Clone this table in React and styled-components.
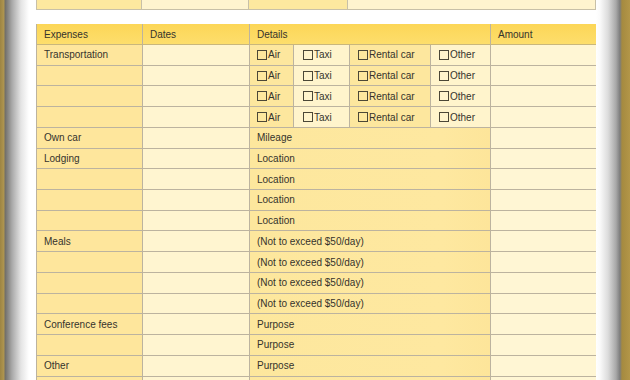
import React from 'react';
import styled, { createGlobalStyle } from 'styled-components';

const GlobalStyle = createGlobalStyle`
  html, body {
    margin: 0;
    padding: 0;
    background: #ffffff;
  }
  body {
    width: 630px;
    height: 380px;
    overflow: hidden;
    font-family: "Liberation Sans", Arial, sans-serif;
  }
`;

const Frame = styled.div`
  display: grid;
  grid-template-columns: 36px 560px 34px;
  width: 630px;
  height: 380px;
  overflow: hidden;
`;

const LeftEdge = styled.div`
  background: linear-gradient(
    to right,
    #9c8443 0px,
    #b09650 4px,
    #6f6d68 5px,
    #a9a9a9 12px,
    #e4e4e4 21px,
    #ffffff 29px
  );
`;

const RightEdge = styled.div`
  background: linear-gradient(
    to right,
    #ffffff 0px,
    #fafafa 4px,
    #dcdcdc 12px,
    #a8a8a8 20px,
    #7c7c7c 24px,
    #a58a40 26px,
    #b39648 34px
  );
`;

const Page = styled.div`
  display: flex;
  flex-direction: column;
  gap: 14px;
  background: #ffffff;
  overflow: hidden;
`;

const TopStrip = styled.div`
  display: grid;
  grid-template-columns: 106px 107px 99px 248px;
  height: 10px;
  flex-shrink: 0;
  border-bottom: 1px solid #c8c0a8;
  box-sizing: border-box;
`;

const StripCell = styled.div`
  background: ${(p) => (p.$dark ? '#fde89f' : '#fff4cf')};
  border-right: 1px solid #c8c0a8;
  border-left: ${(p) => (p.$first ? '1px solid #c8c0a8' : 'none')};
`;

const Sheet = styled.div`
  display: grid;
  grid-template-columns: 106px 107px 44px 56px 81px 60px 106px;
  grid-template-rows: 21px;
  grid-auto-rows: 20.73px;
  border-left: 1px solid #bcb39f;
  box-sizing: border-box;
  color: #35332c;
  font-size: 10px;
`;

const Cell = styled.div`
  display: flex;
  align-items: center;
  box-sizing: border-box;
  padding-left: ${(p) => p.$pad || 7}px;
  border-right: 1px solid #bcb39f;
  border-bottom: 1px solid #bcb39f;
  grid-column: ${(p) => p.$span || 'auto'};
  white-space: nowrap;
  background: ${(p) => p.$bg};
`;

const HeadCell = styled(Cell)`
  background: linear-gradient(to bottom, #fcd657, #fdde6c);
  border-bottom: 1px solid #c9b77c;
`;

const Box = styled.span`
  display: inline-block;
  width: 8px;
  height: 8px;
  border: 1px solid #4b4737;
  margin-right: 1px;
  flex-shrink: 0;
`;

const colors = {
  expense: '#fee69c',
  dates: '#fff5d0',
  details: 'linear-gradient(to right, #fde79d, #fee8a0 80%, #fde59a)',
  light: '#fff4cc',
  amount: '#fff6d4',
};

const rows = [
  { label: 'Transportation', transport: true },
  { label: '', transport: true },
  { label: '', transport: true },
  { label: '', transport: true },
  { label: 'Own car', detail: 'Mileage' },
  { label: 'Lodging', detail: 'Location' },
  { label: '', detail: 'Location' },
  { label: '', detail: 'Location' },
  { label: '', detail: 'Location' },
  { label: 'Meals', detail: '(Not to exceed $50/day)' },
  { label: '', detail: '(Not to exceed $50/day)' },
  { label: '', detail: '(Not to exceed $50/day)' },
  { label: '', detail: '(Not to exceed $50/day)' },
  { label: 'Conference fees', detail: 'Purpose' },
  { label: '', detail: 'Purpose' },
  { label: 'Other', detail: 'Purpose' },
  { label: '', detail: '' },
];

const transportOptions = [
  { name: 'Air', bg: '#fde79e', pad: 7 },
  { name: 'Taxi', bg: colors.light, pad: 9 },
  { name: 'Rental car', bg: '#fde79e', pad: 8 },
  { name: 'Other', bg: colors.light, pad: 8 },
];

function ExpenseRow({ row }) {
  return (
    <>
      <Cell $bg={colors.expense}>{row.label}</Cell>
      <Cell $bg={colors.dates} />
      {row.transport ? (
        transportOptions.map((opt) => (
          <Cell key={opt.name} $bg={opt.bg} $pad={opt.pad}>
            <Box />
            {opt.name}
          </Cell>
        ))
      ) : (
        <Cell $bg={colors.details} $span="span 4">
          {row.detail}
        </Cell>
      )}
      <Cell $bg={colors.amount} />
    </>
  );
}

export default function App() {
  return (
    <>
      <GlobalStyle />
      <Frame>
        <LeftEdge />
        <Page>
          <TopStrip>
            <StripCell $dark $first />
            <StripCell />
            <StripCell $dark />
            <StripCell />
          </TopStrip>
          <Sheet>
            <HeadCell>Expenses</HeadCell>
            <HeadCell>Dates</HeadCell>
            <HeadCell $span="span 4">Details</HeadCell>
            <HeadCell>Amount</HeadCell>
            {rows.map((row, i) => (
              <ExpenseRow key={i} row={row} />
            ))}
          </Sheet>
        </Page>
        <RightEdge />
      </Frame>
    </>
  );
}
